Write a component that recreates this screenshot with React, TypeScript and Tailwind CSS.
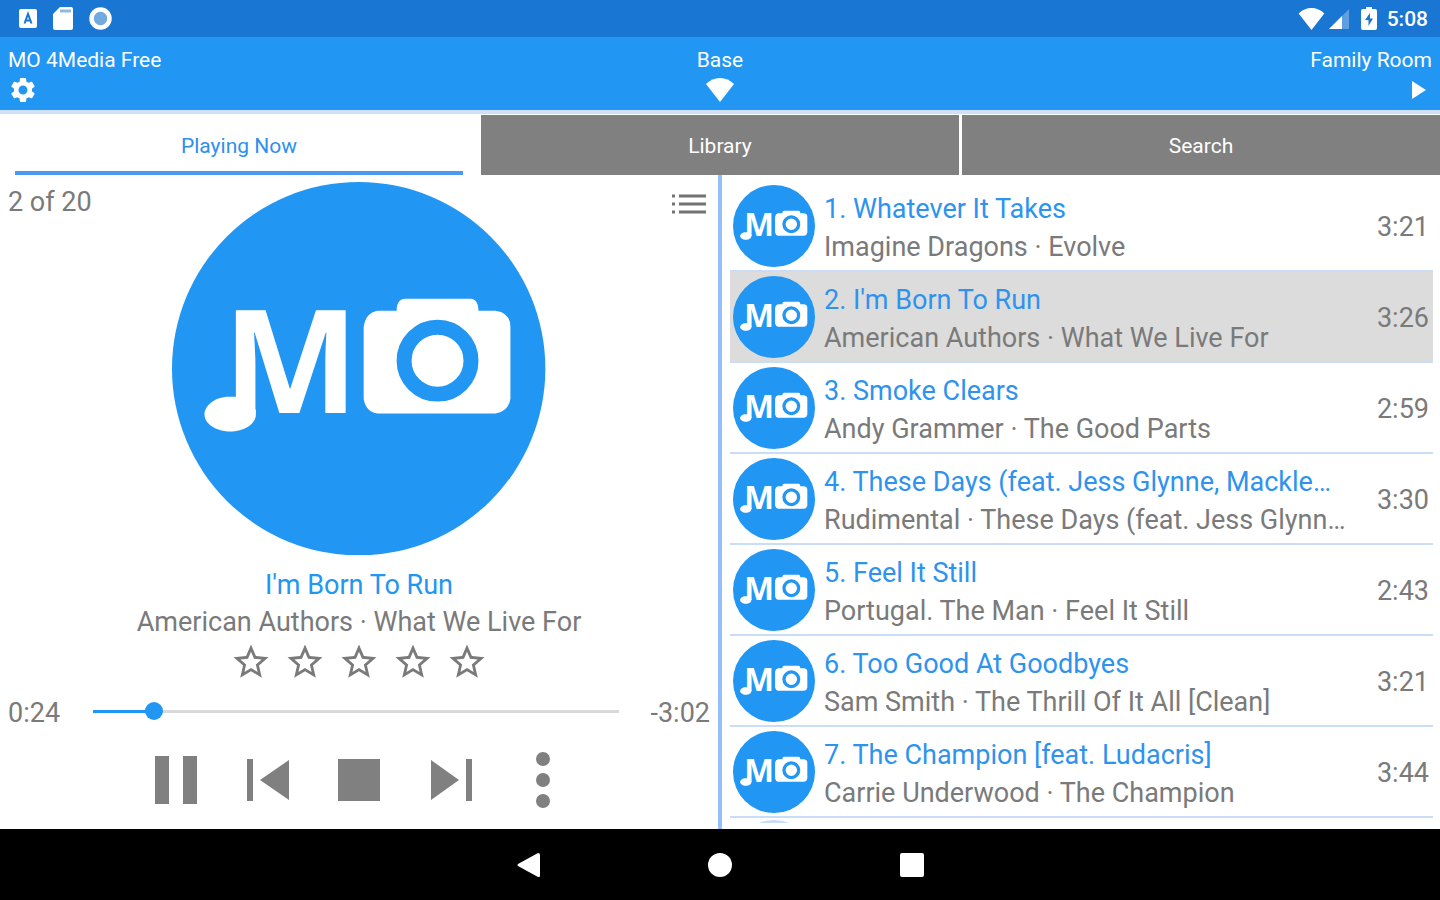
import { useState } from "react";
import { MdSettings, MdStarBorder } from "react-icons/md";

// ─── Data ────────────────────────────────────────────────────────────────────

type Track = { title: string; artist: string; album: string; length: string };

const TRACKS: Track[] = [
  { title: "Whatever It Takes", artist: "Imagine Dragons", album: "Evolve", length: "3:21" },
  { title: "I'm Born To Run", artist: "American Authors", album: "What We Live For", length: "3:26" },
  { title: "Smoke Clears", artist: "Andy Grammer", album: "The Good Parts", length: "2:59" },
  {
    title: "These Days (feat. Jess Glynne, Mackle…",
    artist: "Rudimental",
    album: "These Days (feat. Jess Glynn…",
    length: "3:30",
  },
  { title: "Feel It Still", artist: "Portugal. The Man", album: "Feel It Still", length: "2:43" },
  { title: "Too Good At Goodbyes", artist: "Sam Smith", album: "The Thrill Of It All [Clean]", length: "3:21" },
  { title: "The Champion [feat. Ludacris]", artist: "Carrie Underwood", album: "The Champion", length: "3:44" },
];

const TABS = ["Playing Now", "Library", "Search"];

const DURATION = 206;

function fmtTime(sec: number): string {
  return `${Math.floor(sec / 60)}:${String(sec % 60).padStart(2, "0")}`;
}

// ─── Artwork ─────────────────────────────────────────────────────────────────

function Artwork({ className }: { className: string }) {
  return (
    <svg className={className} viewBox="0 0 374 374" aria-hidden="true">
      <circle cx="187" cy="187" r="187" fill="#2196f3" />
      <g fill="#fff">
        {/* note tail hanging off the M */}
        <path d="M70 215V228H84V233C84 243 72 250 58 250S32.500 242 32.500 233S43 215 57 215Z" />
        <text x="51" y="231" fontSize="144" fontWeight="700" fontFamily="'Open Sans', 'Noto Sans', sans-serif">
          M
        </text>
        <path d="M206 129H225C225 121 228 117 234 117H299C304 117 307 121 307 129H324Q339 131 339 145V217Q337 230 324 232H206Q194 230 192 217V145Q194 131 206 129Z" />
      </g>
      <circle cx="266" cy="179" r="33.5" fill="#fff" stroke="#2196f3" strokeWidth="15" />
    </svg>
  );
}

// ─── Status bar and header ───────────────────────────────────────────────────

function WifiIcon({ className }: { className: string }) {
  return (
    <svg className={className} viewBox="0 0 28 24" fill="currentColor" aria-hidden="true">
      <path d="M14 24L0 6Q6 0 14 0T28 6Z" />
    </svg>
  );
}

function StatusBar() {
  return (
    <div className="flex h-[37px] items-center justify-between bg-[#1976d2] pr-3 pl-[19px] text-white">
      <div className="flex items-center gap-4">
        <svg className="h-[19px] w-[18px]" viewBox="0 0 18 19" aria-hidden="true">
          <rect width="18" height="19" rx="2" fill="#fff" />
          <path d="M5.500 14.500L9 5L12.500 14.500M6.500 11.500H11.500" fill="none" stroke="#1976d2" strokeWidth="2" />
        </svg>
        <svg className="h-[23px] w-5" viewBox="0 0 20 23" aria-hidden="true">
          <path d="M7 0H18Q20 0 20 2V21Q20 23 18 23H2Q0 23 0 21V7Z" fill="#fff" />
          <path d="M7 4H18" stroke="#8fb8e4" strokeWidth="3" />
        </svg>
        <svg className="size-[23px]" viewBox="0 0 23 23" aria-hidden="true">
          <circle cx="11.5" cy="11.5" r="9" fill="#72a9df" stroke="#fff" strokeWidth="4.5" />
        </svg>
      </div>
      <div className="flex items-center">
        <WifiIcon className="h-[22px] w-[27px]" />
        <svg className="ml-1 size-5" viewBox="0 0 20 20" aria-hidden="true">
          <path d="M20 0V20H0Z" fill="#5e9fdf" />
          <path d="M13 7V20H0Z" fill="#fff" />
        </svg>
        <svg className="ml-3 h-[23px] w-4" viewBox="0 0 16 23" aria-hidden="true">
          <path d="M5 0H11V2H14Q16 2 16 4V21Q16 23 14 23H2Q0 23 0 21V4Q0 2 2 2H5Z" fill="#fff" />
          <path d="M9 6L4 13H7.500V19L12 11.500H9Z" fill="#1976d2" />
        </svg>
        <span className="ml-[10px] text-[21px] leading-6 font-medium">5:08</span>
      </div>
    </div>
  );
}

function Header() {
  return (
    <header className="grid grid-cols-3 border-b-4 border-[#cfe0f8] bg-[#2196f3] px-2 pt-2 pb-[5px] text-[21px] leading-[30px] text-white">
      <div className="flex flex-col items-start">
        <h1>MO 4Media Free</h1>
        <button type="button" aria-label="Settings" className="flex h-[30px] items-center">
          <MdSettings className="size-[30px]" />
        </button>
      </div>
      <div className="flex flex-col items-center">
        <span>Base</span>
        <button type="button" aria-label="Base connection" className="flex h-[30px] items-center">
          <WifiIcon className="h-6 w-7" />
        </button>
      </div>
      <div className="flex flex-col items-end">
        <span>Family Room</span>
        <button type="button" aria-label="Play in Family Room" className="flex h-[30px] items-center pr-[6px]">
          <svg className="h-[18px] w-[14px]" viewBox="0 0 14 18" fill="currentColor" aria-hidden="true">
            <path d="M0 0L14 9L0 18Z" />
          </svg>
        </button>
      </div>
    </header>
  );
}

function Tabs() {
  return (
    <div role="tablist" className="grid grid-cols-3 gap-[3px] pt-px text-[21px] leading-6">
      {TABS.map((tab, i) =>
        i === 0 ? (
          <button key={tab} type="button" role="tab" aria-selected="true" className="px-[15px] text-[#2e8fec]">
            <span className="flex h-[60px] items-center justify-center border-b-4 border-[#4a98f0] pt-[6px]">{tab}</span>
          </button>
        ) : (
          <button
            key={tab}
            type="button"
            role="tab"
            aria-selected="false"
            className="h-[60px] bg-[#808080] pt-[2px] text-white"
          >
            {tab}
          </button>
        ),
      )}
    </div>
  );
}

// ─── Player ──────────────────────────────────────────────────────────────────

function SeekBar() {
  const [pos, setPos] = useState(24);
  return (
    <div className="mt-[9px] flex h-[38px] items-center px-2">
      <span className="w-[76px] pt-1">{fmtTime(pos)}</span>
      <div className="relative flex h-5 flex-1 items-center">
        <div className="absolute inset-x-[9px] h-[3px] bg-[#d9d9d9]">
          <div className="h-full bg-[#2196f3]" style={{ width: `${(pos / DURATION) * 100}%` }} />
        </div>
        <input
          type="range"
          aria-label="Position"
          min={0}
          max={DURATION}
          value={pos}
          onChange={(e) => setPos(Number(e.target.value))}
          className="relative w-full appearance-none bg-transparent [&::-webkit-slider-thumb]:size-[18px] [&::-webkit-slider-thumb]:appearance-none [&::-webkit-slider-thumb]:rounded-full [&::-webkit-slider-thumb]:bg-[#2196f3]"
        />
      </div>
      <span className="w-[82px] pt-1 text-right">-{fmtTime(DURATION - pos)}</span>
    </div>
  );
}

const CONTROLS = [
  { label: "Pause", d: "M8 4H22V52H8ZM36 4H50V52H36Z" },
  { label: "Previous", d: "M8 7H14V49H8ZM50 8V48L21 28Z" },
  { label: "Stop", d: "M7 7H49V49H7Z" },
  { label: "Next", d: "M43 7H49V49H43ZM8 8V48L36 28Z" },
  {
    label: "More",
    d: "M28 0A7 7 0 0 1 28 14A7 7 0 0 1 28 0ZM28 21A7 7 0 0 1 28 35A7 7 0 0 1 28 21ZM28 42A7 7 0 0 1 28 56A7 7 0 0 1 28 42Z",
  },
];

function Player() {
  const track = TRACKS[1];
  return (
    <section className="pt-[7px]">
      <div className="grid grid-cols-[1fr_52%_1fr] items-start">
        <p className="pl-2 leading-10">2 of {20}</p>
        <Artwork className="w-full" />
        <button type="button" aria-label="Show queue" className="mt-3 mr-3 justify-self-end">
          <svg className="h-5 w-[34px]" viewBox="0 0 34 20" fill="none" stroke="#737373" strokeWidth="3" aria-hidden="true">
            <path d="M0 2H3M7 2H34M0 10H3M7 10H34M0 18H3M7 18H34" />
          </svg>
        </button>
      </div>
      <div className="mt-3 text-center leading-[37px]">
        <h2 className="text-[#2196f3]">{track.title}</h2>
        <p>
          {track.artist} · {track.album}
        </p>
      </div>
      <div className="flex justify-center gap-3">
        {[1, 2, 3, 4, 5].map((n) => (
          <button key={n} type="button" aria-label={`Rate ${n}`}>
            <MdStarBorder className="size-[42px]" />
          </button>
        ))}
      </div>
      <SeekBar />
      <div className="mt-[22px] flex justify-center gap-9">
        {CONTROLS.map((c) => (
          <button key={c.label} type="button" aria-label={c.label}>
            <svg className="size-14" viewBox="0 0 56 56" fill="#808080" aria-hidden="true">
              <path d={c.d} />
            </svg>
          </button>
        ))}
      </div>
    </section>
  );
}

// ─── Queue ───────────────────────────────────────────────────────────────────

function Queue() {
  return (
    <section className="flex min-w-0 flex-col py-[6px] pr-[7px] pl-2">
      <ol className="flex-1 basis-0 overflow-hidden">
        {TRACKS.map((t, i) => (
          <li
            key={t.title}
            className={`flex h-[91px] items-center border-b-2 border-[#c9dcf8] pr-1 pl-[3px] ${i === 1 ? "bg-[#dcdcdc]" : ""}`}
          >
            <Artwork className="size-[82px] shrink-0" />
            <div className="ml-[9px] min-w-0 flex-1 pt-1 leading-[38px]">
              <p className="truncate text-[#2e93ee]">
                {i + 1}. {t.title}
              </p>
              <p className="truncate">
                {t.artist} · {t.album}
              </p>
            </div>
            <span className="shrink-0 pt-1 pl-3 text-right">{t.length}</span>
          </li>
        ))}
        {/* top edge of the next cover */}
        <li className="pt-[2px] pl-[3px]" aria-hidden="true">
          <div className="size-[82px] rounded-full bg-[#c9dcf8]" />
        </li>
      </ol>
    </section>
  );
}

// ─── Navigation bar ──────────────────────────────────────────────────────────

function NavBar() {
  return (
    <nav className="flex h-[71px] items-start justify-center gap-[168px] bg-black pt-6 text-white">
      <button type="button" aria-label="Back">
        <svg className="size-6" viewBox="0 0 24 24" fill="currentColor" aria-hidden="true">
          <path d="M22 0Q24 0 24 2V22Q24 25 22 24L2 13Q1 12 2 11Z" />
        </svg>
      </button>
      <button type="button" aria-label="Home">
        <svg className="size-6" viewBox="0 0 24 24" fill="currentColor" aria-hidden="true">
          <circle cx="12" cy="12" r="12" />
        </svg>
      </button>
      <button type="button" aria-label="Recent apps">
        <svg className="size-6" viewBox="0 0 24 24" fill="currentColor" aria-hidden="true">
          <rect width="24" height="24" rx="2" />
        </svg>
      </button>
    </nav>
  );
}

export default function App() {
  return (
    <div className="flex min-h-screen flex-col bg-white font-['Roboto',sans-serif] text-[27px] text-[#7a7a7a]">
      <StatusBar />
      <Header />
      <Tabs />
      <main className="grid flex-1 grid-cols-[1fr_4px_1fr]">
        <Player />
        <div className="bg-[#93c0fb]" />
        <Queue />
      </main>
      <NavBar />
    </div>
  );
}
